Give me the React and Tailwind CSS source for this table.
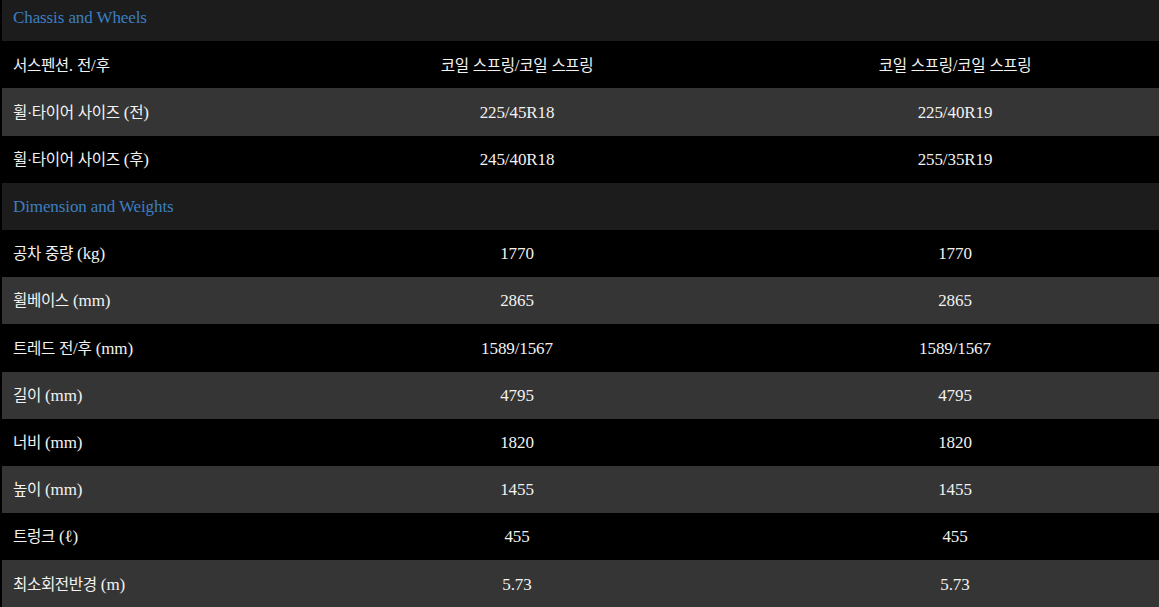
import React from 'react';

const sections = [
  {
    title: 'Chassis and Wheels',
    rows: [
      ['서스펜션. 전/후', '코일 스프링/코일 스프링', '코일 스프링/코일 스프링'],
      ['휠·타이어 사이즈 (전)', '225/45R18', '225/40R19'],
      ['휠·타이어 사이즈 (후)', '245/40R18', '255/35R19'],
    ],
  },
  {
    title: 'Dimension and Weights',
    rows: [
      ['공차 중량 (kg)', '1770', '1770'],
      ['휠베이스 (mm)', '2865', '2865'],
      ['트레드 전/후 (mm)', '1589/1567', '1589/1567'],
      ['길이 (mm)', '4795', '4795'],
      ['너비 (mm)', '1820', '1820'],
      ['높이 (mm)', '1455', '1455'],
      ['트렁크 (ℓ)', '455', '455'],
      ['최소회전반경 (m)', '5.73', '5.73'],
    ],
  },
];

// hangul renders a touch smaller than the latin serif
const Mixed = ({ text }) =>
  text.split(/([\u3131-\uD7A3·]+)/g).map((part, i) =>
    /[\u3131-\uD7A3]/.test(part) ? (
      <span key={i} className="text-[15.6px] tracking-[-0.4px]">{part}</span>
    ) : (
      <span key={i}>{part}</span>
    )
  );

const SpecRow = ({ label, a, b, odd }) => (
  <div className={`flex h-[47.2px] items-center pt-[1px] text-[17px] text-[#f2f2f2] ${odd ? 'bg-[#353535]' : 'bg-black'}`}>
    <div className="w-[296px] shrink-0 pl-[11px]"><Mixed text={label} /></div>
    <div className="w-[438px] shrink-0 text-center"><Mixed text={a} /></div>
    <div className="w-[438px] shrink-0 text-center"><Mixed text={b} /></div>
  </div>
);

export default function App() {
  return (
    <div className="h-[607px] w-full overflow-hidden bg-black font-['Liberation_Serif','Noto_Sans_CJK_KR',serif] tracking-[-0.1px]">
      <div className="mt-[-6px] w-[1174px] pl-[2px]">
        {sections.map((section) => (
          <div key={section.title}>
            <div className="flex h-[47.2px] items-center bg-[#1c1c1c] pl-[11px] pt-[1px] text-[17px] text-[#3d7fc0]">
              {section.title}
            </div>
            {section.rows.map(([label, a, b], i) => (
              <SpecRow key={label} label={label} a={a} b={b} odd={i % 2 === 1} />
            ))}
          </div>
        ))}
      </div>
    </div>
  );
}
